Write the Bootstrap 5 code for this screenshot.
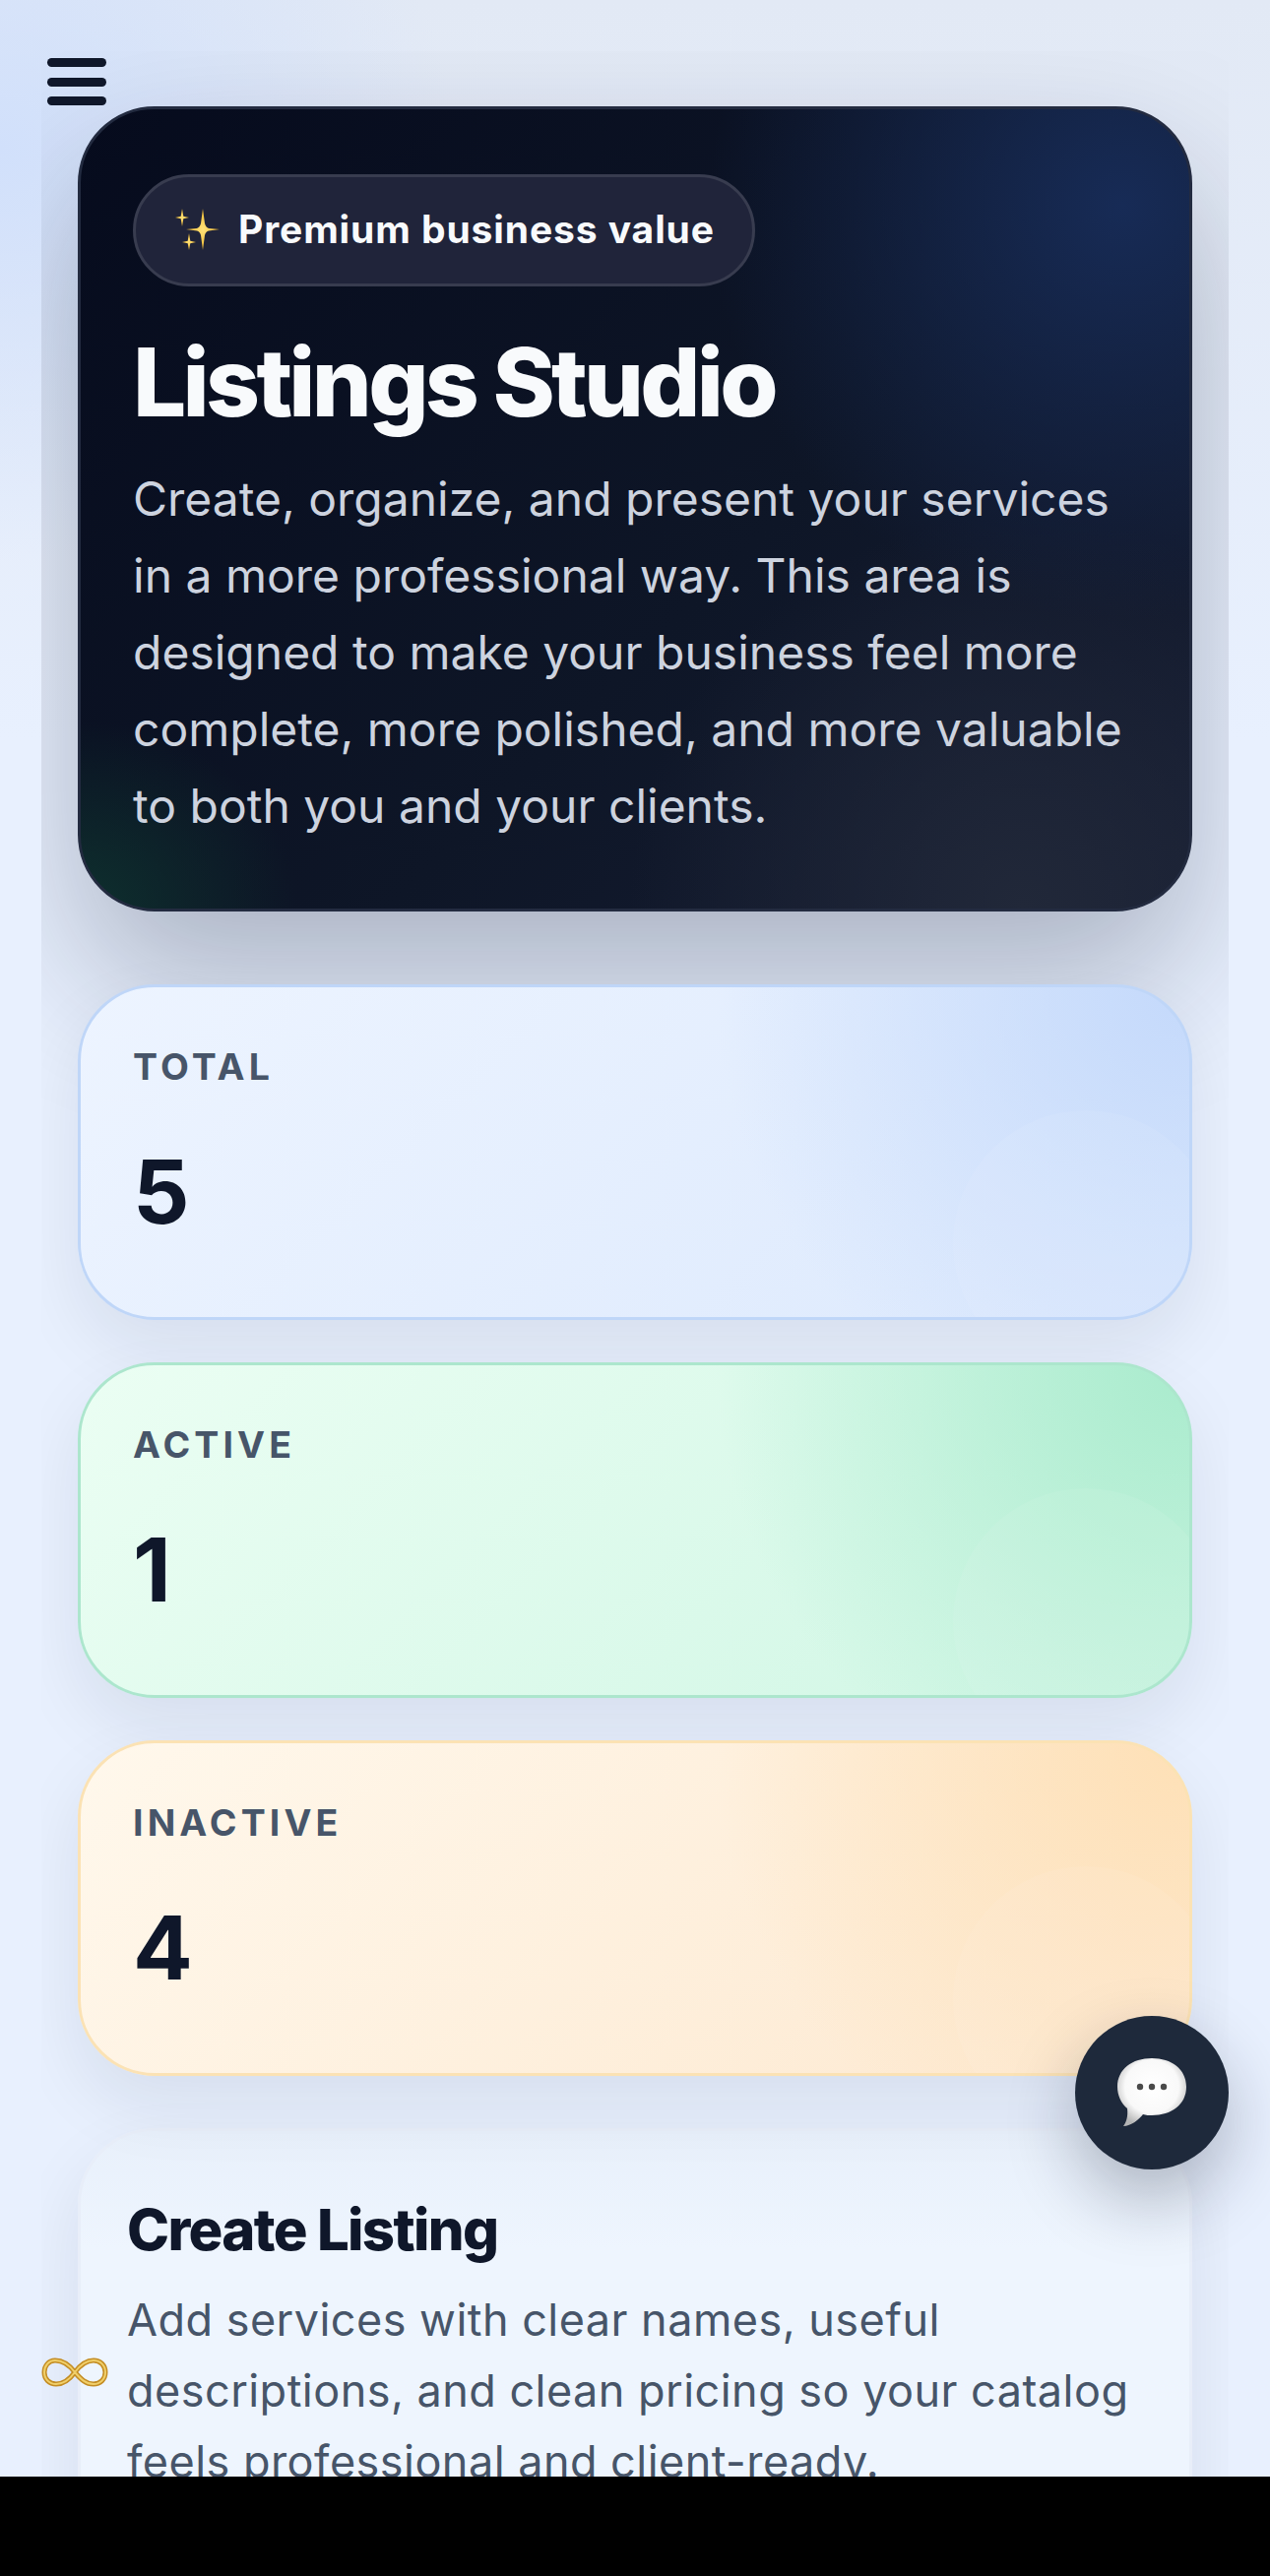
<!DOCTYPE html>
<html lang="en">
<head>
    <meta charset="UTF-8">
    <meta name="viewport" content="width=device-width, initial-scale=1.0">
    <title>Listings Studio</title>
    <link href="https://cdn.jsdelivr.net/npm/bootstrap@5.3.0/dist/css/bootstrap.min.css" rel="stylesheet">
    <style>
        html, body {
            height: 100%;
        }
        body {
            font-family: Inter, "Noto Sans", sans-serif;
            background: #000;
            overflow: hidden;
        }
        .app-screen {
            height: 2516px;
            overflow: hidden;
            background:
                radial-gradient(ellipse 460px 420px at 0 6%, #d1e0fb 0, rgba(209, 224, 251, 0) 100%),
                linear-gradient(180deg, #e2e9f5 0, #e8f0fe 30%, #e8f0fe 100%);
        }
        .page-panel {
            height: 2464px;
            margin: 52px 42px 0;
            padding: 56px 37px 0;
            overflow: hidden;
        }
        .hero-card {
            height: 818px;
            padding: 66px 53px 0;
            border: 3px solid #232b40;
            border-radius: 78px;
            color: #f8fafc;
            background:
                radial-gradient(circle at 94% 12%, #172b56 0, rgba(23, 43, 86, 0) 420px),
                radial-gradient(ellipse 220px 190px at 0 100%, #0e302e 0, rgba(14, 48, 46, 0) 100%),
                radial-gradient(circle at 85% 100%, #212839 0, rgba(33, 40, 57, 0) 400px),
                linear-gradient(135deg, #060b1d 0, #0e1627 58%, #161d33 100%);
            box-shadow: 0 72px 150px rgba(15, 23, 42, .28);
        }
        .value-pill {
            height: 114px;
            width: 632px;
            padding-left: 39px;
            padding-bottom: 2px;
            gap: 19px;
            border: 3px solid #383c4f;
            border-radius: 57px;
            background: #20243a;
            font-size: 39px;
            letter-spacing: .9px;
            font-weight: 700;
            color: #f8fafc;
            white-space: nowrap;
        }
        .hero-title {
            margin: 37px 0 0;
            font-size: 96px;
            line-height: 120px;
            font-weight: 800;
            letter-spacing: -3.7px;
        }
        .hero-text {
            margin: 20px 0 0;
            font-size: 48px;
            line-height: 78px;
            color: #cdd3df;
        }
        .stat-tile {
            height: 341px;
            padding: 54px 53px 0;
            border: 3px solid;
            border-radius: 78px;
            overflow: hidden;
            box-shadow: 0 30px 70px rgba(15, 23, 42, .08);
        }
        .stat-tile::after {
            content: "";
            position: absolute;
            width: 270px;
            height: 270px;
            right: -30px;
            bottom: -60px;
            border-radius: 50%;
            background: rgba(255, 255, 255, .07);
        }
        .tile-blue {
            border-color: #bfd6f8;
            background:
                radial-gradient(circle at 100% 0, #c4d9fb 0, rgba(196, 217, 251, 0) 480px),
                linear-gradient(135deg, #edf4ff, #dce9fd);
        }
        .tile-green {
            border-color: #ace6cd;
            background:
                radial-gradient(circle at 100% 0, #a9ebcd 0, rgba(169, 235, 205, 0) 480px),
                linear-gradient(135deg, #ebfef3, #cff6e4);
        }
        .tile-amber {
            border-color: #fbe2b4;
            background:
                radial-gradient(circle at 100% 0, #fee0b6 0, rgba(254, 224, 182, 0) 480px),
                linear-gradient(135deg, #fff8ec, #fde8cf);
        }
        .tile-label {
            font-size: 37.5px;
            line-height: 54px;
            font-weight: 700;
            letter-spacing: 4.1px;
            color: #475569;
        }
        .tile-value {
            margin-top: 45px;
            font-size: 90px;
            line-height: 110px;
            font-weight: 700;
            color: #0f172a;
        }
        .stat-stack {
            margin-top: 74px;
            gap: 43px;
        }
        .create-card {
            margin-top: 53px;
            height: 500px;
            padding: 64px 47px 0;
            border: 3px solid #e8eef9;
            border-radius: 78px;
            background: linear-gradient(180deg, #e8f0fb, #eef5fe 120px);
            box-shadow: 0 30px 70px rgba(15, 23, 42, .08);
        }
        .create-title {
            margin: 0;
            font-size: 58px;
            line-height: 72px;
            font-weight: 800;
            letter-spacing: -1.65px;
            color: #0f172a;
        }
        .create-text {
            margin: 20px 0 0;
            font-size: 45px;
            line-height: 72px;
            letter-spacing: .47px;
            color: #475569;
        }
        .menu-toggle {
            top: 59px;
            left: 48px;
            width: 60px;
            gap: 10.5px;
        }
        .menu-toggle span {
            height: 9px;
            border-radius: 5px;
            background: #0f172a;
        }
        .chat-fab {
            top: 2048px;
            left: 1092px;
            width: 156px;
            height: 156px;
            background: #1e293b;
            box-shadow: 0 30px 70px rgba(15, 23, 42, .28);
        }
        .infinity-mark {
            top: 2394px;
            left: 42px;
            width: 68px;
            height: 32px;
        }
        .bottom-strip {
            height: 101px;
            background: #000;
        }
    </style>
</head>
<body>
    <div class="app-screen position-relative">
        <div class="page-panel">
            <div class="hero-card">
                <div class="value-pill d-flex align-items-center">
                    <svg width="46" height="42" viewBox="0 0 46 42" class="flex-shrink-0">
                        <defs>
                            <radialGradient id="spark" cx="50%" cy="50%" r="50%">
                                <stop offset="0" stop-color="#ffe27a"/>
                                <stop offset="1" stop-color="#f2b92c"/>
                            </radialGradient>
                        </defs>
                        <path fill="url(#spark)" d="M29 0 L31 15 Q32 19 35 20 L46 21 L35 22.500 Q32 23 31 27 L29 42 L27 27 Q26 23 23 22.500 L12 21 L23 20 Q26 19 27 15 Z"/>
                        <path fill="url(#spark)" d="M8 0 L9.300 7.700 L15 9 L9.300 10.300 L8 18 L6.700 10.300 L1 9 L6.700 7.700 Z"/>
                        <path fill="url(#spark)" d="M15 25 L16.300 32.700 L22 34 L16.300 35.300 L15 42 L13.700 35.300 L8 34 L13.700 32.700 Z"/>
                    </svg>
                    <span>Premium business value</span>
                </div>
                <h1 class="hero-title">Listings Studio</h1>
                <p class="hero-text">Create, organize, and present your services in a more professional way. This area is designed to make your business feel more complete, more polished, and more valuable to both you and your clients.</p>
            </div>

            <div class="stat-stack d-flex flex-column">
                <div class="stat-tile tile-blue position-relative">
                    <div class="tile-label">TOTAL</div>
                    <div class="tile-value">5</div>
                </div>
                <div class="stat-tile tile-green position-relative">
                    <div class="tile-label">ACTIVE</div>
                    <div class="tile-value">1</div>
                </div>
                <div class="stat-tile tile-amber position-relative">
                    <div class="tile-label">INACTIVE</div>
                    <div class="tile-value">4</div>
                </div>
            </div>

            <div class="create-card">
                <h2 class="create-title">Create Listing</h2>
                <p class="create-text">Add services with clear names, useful descriptions, and clean pricing so your catalog feels professional and client-ready.</p>
            </div>
        </div>

        <div class="menu-toggle position-absolute d-flex flex-column">
            <span></span><span></span><span></span>
        </div>

        <div class="chat-fab position-absolute rounded-circle d-flex align-items-center justify-content-center">
            <svg width="72" height="72" viewBox="0 0 72 72">
                <defs>
                    <radialGradient id="bubble" cx="50%" cy="42%" r="60%">
                        <stop offset="0" stop-color="#ffffff"/>
                        <stop offset=".65" stop-color="#f9f9f9"/>
                        <stop offset="1" stop-color="#b5b5b5"/>
                    </radialGradient>
                </defs>
                <path fill="url(#bubble)" d="M36 1 C56 1 71 12 71 30 C71 48 56 59 36 59 C33 59 30 59 27 58 C23 63 15 70 7 70 C10 66 12 60 11 52 C5 47 1 39 1 30 C1 12 16 1 36 1 Z"/>
                <circle cx="24" cy="30" r="3.200" fill="#4a4a4a"/>
                <circle cx="36" cy="30" r="3.200" fill="#4a4a4a"/>
                <circle cx="48" cy="30" r="3.200" fill="#4a4a4a"/>
            </svg>
        </div>

        <svg class="infinity-mark position-absolute" viewBox="0 0 68 32" fill="none">
            <path stroke="#c48d24" stroke-width="5" d="M34 16 C28 8 22 4 14 4 C7 4 3 10 3 16 C3 23 8 28 15 28 C23 28 29 23 34 16 C40 8 46 4 53 4 C60 4 65 9 65 16 C65 23 60 28 53 28 C45 28 40 23 34 16 Z"/>
            <path stroke="#f0cf6a" stroke-width="2" d="M34 16 C28 8 22 4 14 4 C7 4 3 10 3 16 C3 23 8 28 15 28 C23 28 29 23 34 16 C40 8 46 4 53 4 C60 4 65 9 65 16 C65 23 60 28 53 28 C45 28 40 23 34 16 Z"/>
        </svg>
    </div>
    <div class="bottom-strip"></div>

    <script src="https://cdn.jsdelivr.net/npm/bootstrap@5.3.0/dist/js/bootstrap.bundle.min.js"></script>
</body>
</html>
